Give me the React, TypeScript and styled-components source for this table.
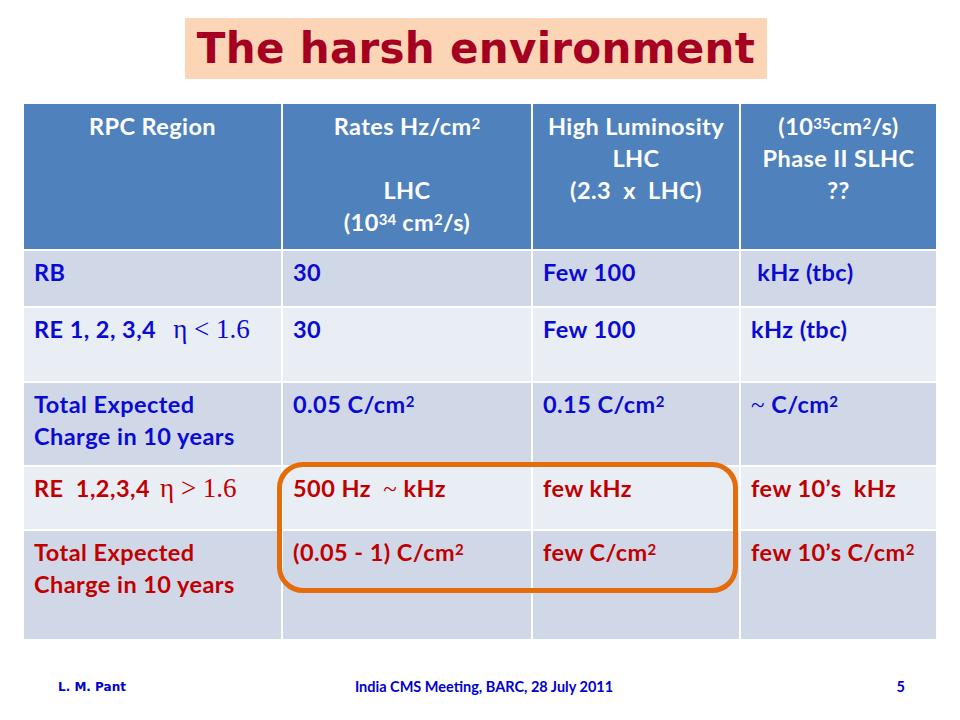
import React from "react";
import styled, { createGlobalStyle } from "styled-components";

const Global = createGlobalStyle`
  * { box-sizing: border-box; }
  body { margin: 0; background: #ffffff; }
`;

const Slide = styled.div`
  position: relative;
  width: 960px;
  height: 720px;
  overflow: hidden;
  background: #ffffff;
  padding-top: 18px;
  display: flex;
  flex-direction: column;
  font-family: Lato, "Open Sans", sans-serif;
`;

const TitleBox = styled.h1`
  margin: 0 0 0 185px;
  width: 582px;
  height: 61px;
  background: #fbd5b5;
  display: flex;
  align-items: center;
  justify-content: center;
  font-family: "DejaVu Sans", Verdana, sans-serif;
  font-weight: bold;
  font-size: 42px;
  color: #a50021;
  letter-spacing: 0.3px;
`;

const Table = styled.div`
  margin: 25px 0 0 24px;
  display: grid;
  grid-template-columns: 257px 248px 206px 195px;
  grid-template-rows: 145px 55px 73px 82px 62px 108px;
  column-gap: 2px;
  row-gap: 2px;
  width: max-content;
`;

const HeadCell = styled.div`
  background: #4f81bd;
  color: #ffffff;
  font-weight: bold;
  font-size: 23.5px;
  letter-spacing: 0.4px;
  line-height: 32px;
  text-align: center;
  padding-top: 6px;
`;

const Cell = styled.div<{ $shade: "dark" | "light"; $tone: "blue" | "red" }>`
  background: ${(p) => (p.$shade === "dark" ? "#d0d8e8" : "#e9edf4")};
  color: ${(p) => (p.$tone === "blue" ? "#0a0ad2" : "#c00000")};
  font-weight: bold;
  font-size: 23.5px;
  letter-spacing: 0.45px;
  line-height: 32px;
  padding: 5px 10px 0 10px;
  white-space: pre;
`;

const Sup = styled.sup`
  font-size: 0.64em;
  line-height: 0;
  vertical-align: 0.42em;
  letter-spacing: 0;
`;

const MathText = styled.span<{ $gap: number }>`
  font-family: "Liberation Serif", "Times New Roman", serif;
  font-weight: normal;
  font-size: 27px;
  letter-spacing: 0;
  margin-left: ${(p) => p.$gap}px;
`;

const Tilde = styled.span`
  font-family: "Liberation Serif", "Times New Roman", serif;
  font-weight: normal;
  font-size: 25px;
`;

const Highlight = styled.div`
  position: absolute;
  left: 277px;
  top: 462px;
  width: 461px;
  height: 131px;
  border: 5px solid #e46c0a;
  border-radius: 26px;
  pointer-events: none;
`;

const Footer = styled.div`
  margin-top: 38px;
  padding: 0 50px 0 58px;
  width: 960px;
  display: grid;
  grid-template-columns: 1fr auto 1fr;
  align-items: center;
  height: 20px;
  line-height: 20px;
  font-family: Lato, sans-serif;
  font-weight: bold;
  font-size: 14.5px;
  color: #0000d0;
`;

const FooterLeft = styled.span`
  font-family: "DejaVu Sans", Verdana, sans-serif;
  font-size: 12px;
`;

const FooterRight = styled.span`
  justify-self: end;
  padding-right: 5px;
`;

const cm2 = (
  <>
    C/cm<Sup>2</Sup>
  </>
);

export default function App() {
  return (
    <>
      <Global />
      <Slide>
        <TitleBox>The harsh environment</TitleBox>
        <Table>
          <HeadCell>RPC Region</HeadCell>
          <HeadCell>
            Rates Hz/cm<Sup>2</Sup>
            <br />
            <br />
            LHC
            <br />
            (10<Sup>34</Sup> cm<Sup>2</Sup>/s)
          </HeadCell>
          <HeadCell>
            High Luminosity
            <br />
            LHC
            <br />
            (2.3&nbsp; x&nbsp; LHC)
          </HeadCell>
          <HeadCell>
            (10<Sup>35</Sup>cm<Sup>2</Sup>/s)
            <br />
            Phase II SLHC
            <br />
            ??
          </HeadCell>

          <Cell $shade="dark" $tone="blue">RB</Cell>
          <Cell $shade="dark" $tone="blue">30</Cell>
          <Cell $shade="dark" $tone="blue">Few 100</Cell>
          <Cell $shade="dark" $tone="blue"> kHz (tbc)</Cell>

          <Cell $shade="light" $tone="blue">
            RE 1, 2, 3,4<MathText $gap={17}>η &lt; 1.6</MathText>
          </Cell>
          <Cell $shade="light" $tone="blue">30</Cell>
          <Cell $shade="light" $tone="blue">Few 100</Cell>
          <Cell $shade="light" $tone="blue">kHz (tbc)</Cell>

          <Cell $shade="dark" $tone="blue">
            {"Total Expected\nCharge in 10 years"}
          </Cell>
          <Cell $shade="dark" $tone="blue">0.05 {cm2}</Cell>
          <Cell $shade="dark" $tone="blue">0.15 {cm2}</Cell>
          <Cell $shade="dark" $tone="blue">
            <Tilde>~</Tilde> {cm2}
          </Cell>

          <Cell $shade="light" $tone="red">
            RE  1,2,3,4<MathText $gap={10}>η &gt; 1.6</MathText>
          </Cell>
          <Cell $shade="light" $tone="red">
            500 Hz  <Tilde>~</Tilde> kHz
          </Cell>
          <Cell $shade="light" $tone="red">few kHz</Cell>
          <Cell $shade="light" $tone="red">few 10’s  kHz</Cell>

          <Cell $shade="dark" $tone="red">
            {"Total Expected\nCharge in 10 years"}
          </Cell>
          <Cell $shade="dark" $tone="red">(0.05 - 1) {cm2}</Cell>
          <Cell $shade="dark" $tone="red">few {cm2}</Cell>
          <Cell $shade="dark" $tone="red">few 10’s {cm2}</Cell>
        </Table>
        <Highlight />
        <Footer>
          <FooterLeft>L. M. Pant</FooterLeft>
          <span>India CMS Meeting, BARC, 28 July 2011</span>
          <FooterRight>5</FooterRight>
        </Footer>
      </Slide>
    </>
  );
}
